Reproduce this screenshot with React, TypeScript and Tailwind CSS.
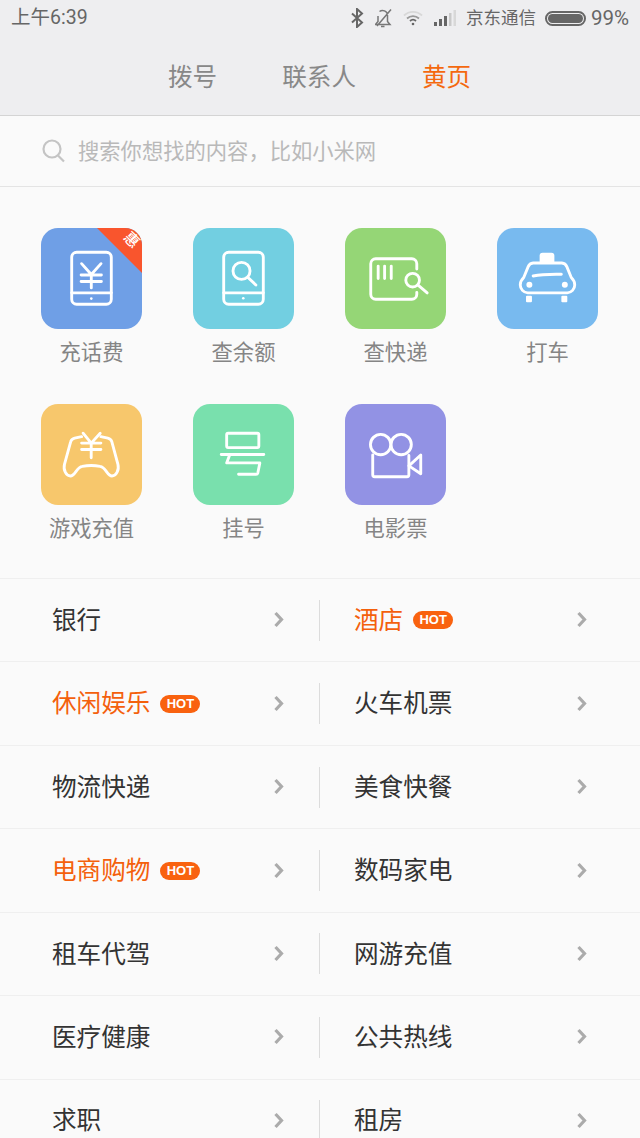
import type { ReactNode } from "react";

const cjk = "font-['Roboto','Noto_Sans_CJK_SC',sans-serif]";

function IconBox({ bg, children, badge }: { bg: string; children: ReactNode; badge?: boolean }) {
  return (
    <div className={`relative h-[101px] w-[101px] overflow-hidden rounded-[17px] ${bg}`}>
      <svg
        viewBox="0 0 102 102"
        className="h-full w-full"
        fill="none"
        stroke="#fff"
        strokeWidth="2.9"
        strokeLinecap="round"
        strokeLinejoin="round"
      >
        {children}
      </svg>
      {badge && (
        <>
          <div className="absolute right-0 top-0 h-[45px] w-[45px] bg-[#f9552d] [clip-path:polygon(0_0,100%_0,100%_100%)]" />
          <span className="absolute right-[3px] top-[4px] rotate-45 text-[15px] leading-[16px] font-medium text-white">惠</span>
        </>
      )}
    </div>
  );
}

const charge = (
  <>
    <rect x="31" y="24.5" width="40" height="52.5" rx="5" />
    <path d="M31 65.5h40" />
    <circle cx="50.8" cy="71.3" r="1.3" fill="#fff" stroke="none" />
    <path d="M41 36l9.8 11 9.8-11M40.5 47.5h20.5M40.5 54h20.5M50.8 47v13.5" />
  </>
);

const balance = (
  <>
    <rect x="31" y="24.5" width="40" height="52.5" rx="5" />
    <path d="M31 65.5h40" />
    <circle cx="50.8" cy="71" r="1.3" fill="#fff" stroke="none" />
    <circle cx="49" cy="43.3" r="8.6" />
    <path d="M55.5 50l8 7.5" />
  </>
);

const express = (
  <>
    <path d="M72.5 41.5V36a5 5 0 0 0-5-5H31a5 5 0 0 0-5 5v31a5 5 0 0 0 5 5h36.5a5 5 0 0 0 5-5v-2" />
    <path d="M33.5 38.5v12.5M40 38.5v12.5M46.7 38.5v12.5" />
    <circle cx="68.3" cy="52.7" r="6.9" />
    <path d="M73.5 57.5l9.5 8" />
  </>
);

const taxi = (
  <>
    <path d="M44.500 34v-6a1.500 1.500 0 0 1 1.500-1.500h9a1.500 1.500 0 0 1 1.500 1.500v6z" fill="#fff" />
    <path d="M27 50l4.500-11a6 6 0 0 1 5-3.700h29a6 6 0 0 1 5 3.700L75 50c2 2 3.500 4.500 3.500 7.500a8 8 0 0 1-7.500 8H31a8 8 0 0 1-7.500-8c0-3 1.500-5.500 3.500-7.500z" />
    <path d="M36.500 48.500c8-1.800 18-2 28.500-1.800" />
    <circle cx="32.700" cy="57.300" r="3" fill="#fff" stroke="none" />
    <circle cx="68.500" cy="57.300" r="3" fill="#fff" stroke="none" />
    <rect x="29.300" y="68.500" width="6" height="6.500" rx="1" fill="#fff" stroke="none" />
    <rect x="65" y="68.500" width="6" height="6.500" rx="1" fill="#fff" stroke="none" />
  </>
);

const game = (
  <>
    <path d="M41 33l-7 1.500c-2 .5-3.500 1.500-4 3.500L23.700 61c-1.500 6 2 11.700 6 11.700 5 0 6-8.700 12-9.700 5-1 13-1 18 0 6 1 7 9.700 12 9.700 4 0 7.500-5.700 6-11.700L71.500 38c-.5-2-2-3-4-3.500L60.500 33" />
    <path d="M42.500 29.500L50.700 39.500 59.800 29.500M41 39.500h19.500M41 46h19.500M50.700 39.500v14.800" />
  </>
);

const hao = (
  <>
    <rect x="34" y="29.500" width="32.500" height="14.500" rx="1.500" />
    <path d="M28.500 51h43M37 51.500l-3 8h33.500L65.500 69.500a2 2 0 0 1-2 1.500H46" />
  </>
);

const movie = (
  <>
    <circle cx="36" cy="41" r="10.300" />
    <circle cx="56.700" cy="41" r="10.300" />
    <path d="M28 51.500V71.500a2 2 0 0 0 2 2h32.500a2 2 0 0 0 2-2V52" />
    <path d="M64.500 62.500L76.500 51.500V70.500z" />
  </>
);

const apps = [
  { name: "充话费", bg: "bg-[#6f9fe6]", icon: charge, badge: true },
  { name: "查余额", bg: "bg-[#72cfe1]", icon: balance },
  { name: "查快递", bg: "bg-[#95d676]", icon: express },
  { name: "打车", bg: "bg-[#78baef]", icon: taxi },
  { name: "游戏充值", bg: "bg-[#f7c76c]", icon: game },
  { name: "挂号", bg: "bg-[#79e0ad]", icon: hao },
  { name: "电影票", bg: "bg-[#9292e4]", icon: movie },
];

const rows = [
  [{ name: "银行" }, { name: "酒店", hot: true }],
  [{ name: "休闲娱乐", hot: true }, { name: "火车机票" }],
  [{ name: "物流快递" }, { name: "美食快餐" }],
  [{ name: "电商购物", hot: true }, { name: "数码家电" }],
  [{ name: "租车代驾" }, { name: "网游充值" }],
  [{ name: "医疗健康" }, { name: "公共热线" }],
  [{ name: "求职" }, { name: "租房" }],
];

function Chevron() {
  return (
    <svg width="12" height="18" viewBox="0 0 12 18" fill="none" stroke="#ababab" strokeWidth="3.200">
      <path d="M2.500 2l6 6.500-6 6.500" />
    </svg>
  );
}

function Cell({ name, hot, className }: { name: string; hot?: boolean; className: string }) {
  return (
    <div className={`flex items-center ${className}`}>
      <span className={`pt-[2px] text-[24.600px] ${hot ? "text-[#f4600c]" : "text-[#333]"}`}>{name}</span>
      {hot && (
        <span className="ml-[10px] flex h-[18px] w-[40px] items-center justify-center rounded-full bg-[#f9620f] font-['Liberation_Sans',sans-serif] text-[13px] font-bold text-white">
          HOT
        </span>
      )}
      <span className="ml-auto">
        <Chevron />
      </span>
    </div>
  );
}

function StatusIcons() {
  return (
    <div className="flex items-center">
      <svg width="14" height="20" viewBox="0 0 14 20" fill="none" stroke="#666" strokeWidth="2">
        <path d="M2 5.500l10 9-5 4.500V1l5 4.500-10 9" />
      </svg>
      <svg className="ml-[9px]" width="20" height="20" viewBox="0 0 20 20" fill="none" stroke="#777" strokeWidth="1.500">
        <path d="M2 16.500h15l-2.500-3V7a5 5 0 0 0-8-3.500M5 8v5.500l-2.500 3M18 1.500L4 18M8 18.500h3.500" />
      </svg>
      <svg className="ml-[10px]" width="20" height="16" viewBox="0 0 20 16" fill="none" strokeWidth="1.800">
        <path d="M1 5.500a13 13 0 0 1 18 0" stroke="#d8d8d8" />
        <path d="M4 8.500a9 9 0 0 1 12 0" stroke="#999" />
        <path d="M7 11a4.500 4.500 0 0 1 6 0" stroke="#666" />
        <circle cx="10" cy="14" r="1.300" fill="#666" />
      </svg>
      <svg className="ml-[11px]" width="22" height="18" viewBox="0 0 22 18">
        <rect x="0" y="13" width="3" height="4" fill="#666" />
        <rect x="5" y="10" width="3" height="7" fill="#666" />
        <rect x="10" y="7" width="3" height="10" fill="#666" />
        <rect x="15" y="4" width="2.500" height="13" fill="#c9c9c9" />
        <rect x="19.500" y="1" width="2.500" height="16" fill="#d8d8d8" />
      </svg>
    </div>
  );
}

export default function App() {
  return (
    <div className={`h-[1138px] w-[640px] overflow-hidden bg-[#fafafa] ${cjk}`}>
      <div className="h-[116px] border-b border-[#d4d4d4] bg-[#eeeef0]">
        <div className="flex h-[36px] items-center justify-between pl-[11px] pr-[11px] text-[#666]">
          <span className="text-[19.500px]">上午6:39</span>
          <div className="flex items-center">
            <StatusIcons />
            <span className="ml-[10px] text-[17.500px]">京东通信</span>
            <div className="ml-[9px] flex h-[15px] w-[41px] items-center rounded-full border-2 border-[#666] p-[1px]">
              <div className="h-full w-full rounded-full bg-[#666]" />
            </div>
            <span className="ml-[5px] text-[20.500px]">99%</span>
          </div>
        </div>
        <div className="flex h-[79px] items-center pt-[5px] text-[24.600px] text-[#888]">
          <span className="ml-[168px]">拨号</span>
          <span className="ml-[65px]">联系人</span>
          <span className="ml-[66px] text-[#f4690f]">黄页</span>
        </div>
      </div>

      <div className="flex h-[71px] items-center border-b border-[#e4e4e4] pl-[42px]">
        <svg width="24" height="24" viewBox="0 0 24 24" fill="none" stroke="#c4c4c4" strokeWidth="2.200">
          <circle cx="10" cy="10" r="8.500" />
          <path d="M16 16.500l6 6" />
        </svg>
        <span className="ml-[12px] pt-[2px] text-[21.300px] text-[#b9b9b9]">搜索你想找的内容，比如小米网</span>
      </div>

      <div className="grid h-[391px] grid-cols-[repeat(4,152px)] content-start gap-y-[36px] pl-[41px] pt-[41px]">
        {apps.map((a) => (
          <div key={a.name} className="w-[101px]">
            <IconBox bg={a.bg} badge={a.badge}>
              {a.icon}
            </IconBox>
            <div className="-mx-[20px] mt-[9px] h-[30px] text-center text-[21.300px] leading-[30px] text-[#858585]">
              {a.name}
            </div>
          </div>
        ))}
      </div>

      <div>
        {rows.map((r, i) => (
          <div key={i} className="flex h-[83.450px] items-center border-t border-[#efefef]">
            <Cell {...r[0]} className="w-[319px] pl-[52px] pr-[34px]" />
            <div className="h-[41px] w-px bg-[#dcdcdc]" />
            <Cell {...r[1]} className="w-[320px] pl-[34px] pr-[52px]" />
          </div>
        ))}
      </div>
    </div>
  );
}
